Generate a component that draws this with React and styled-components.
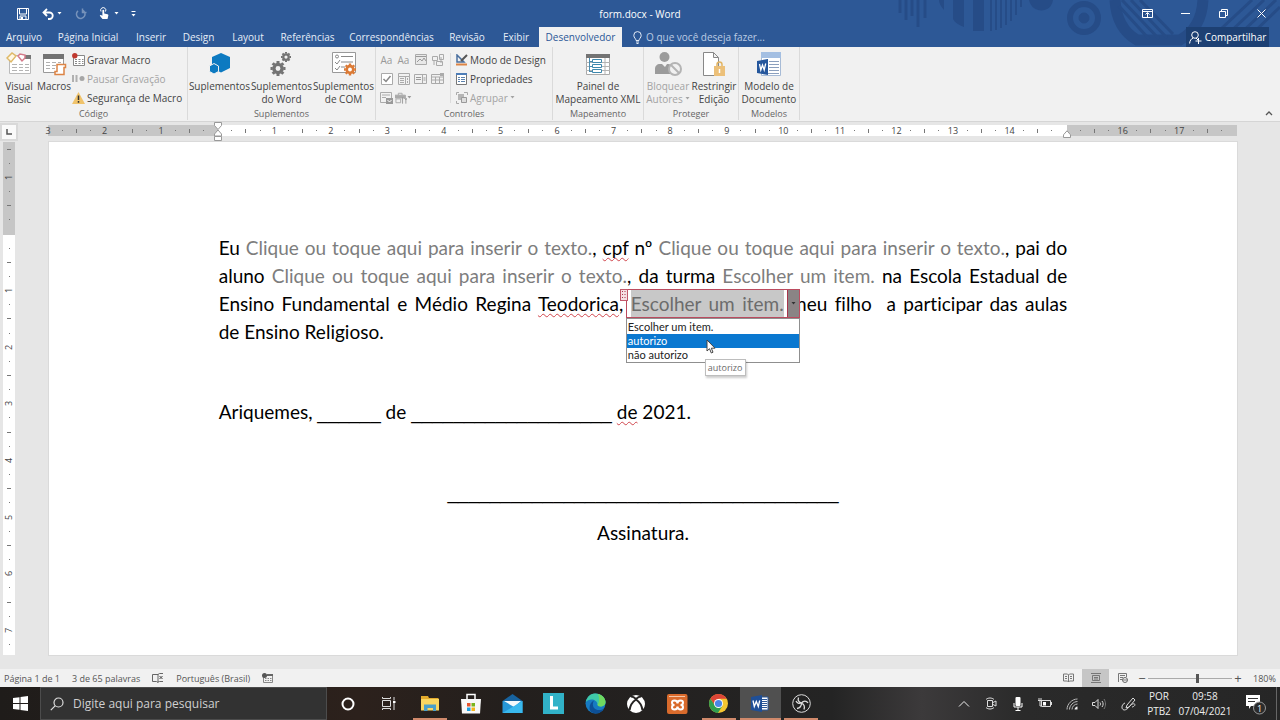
import { useState } from 'react';
import styled, { createGlobalStyle, css } from 'styled-components';

const GlobalStyle = createGlobalStyle`
  *, *::before, *::after {
    box-sizing: border-box;
  }

  body {
    margin: 0;
    font-family: 'Open Sans', 'Noto Sans', sans-serif;
    font-size: 10px;
    color: #444;
  }

  button, input, select {
    font: inherit;
    color: inherit;
    margin: 0;
    padding: 0;
    border: none;
    background: none;
  }
`;

const Screen = styled.div`
  display: flex;
  flex-direction: column;
  height: 100vh;
  overflow: hidden;
  background: #e6e6e6;
`;

/* ---------- title bar and tabs ---------- */

const Header = styled.header`
  position: relative;
  background: #2d5896;
  color: #fff;
`;

const HeaderArt = styled.svg`
  position: absolute;
  top: 0;
  right: 0;
`;

const TitleBar = styled.div`
  position: relative;
  display: grid;
  grid-template-columns: 1fr auto 1fr;
  align-items: center;
  height: 27px;
`;

const QuickAccess = styled.div`
  display: flex;
  align-items: center;
  gap: 8px;
  padding-left: 16px;
`;

const IconButton = styled.button`
  display: flex;
  align-items: center;
  justify-content: center;
  width: ${(p) => p.$w || 14}px;
  height: 16px;
  opacity: ${(p) => (p.$dim ? 0.35 : 1)};
`;

const Title = styled.h1`
  margin: 0;
  font-size: 10px;
  font-weight: 400;
`;

const WindowButtons = styled.div`
  display: flex;
  justify-content: flex-end;
`;

const WindowButton = styled.button`
  display: flex;
  align-items: center;
  justify-content: center;
  width: 38px;
  height: 26px;
`;

const TabRow = styled.nav`
  position: relative;
  display: flex;
  align-items: stretch;
  height: 20px;
`;

const Tab = styled.button`
  width: ${(p) => p.$w}px;
  font-size: 10px;
  white-space: nowrap;
  color: #e6edf7;
  ${(p) =>
    p.$active &&
    css`
      background: #f1f1f1;
      color: #2b5797;
    `}
`;

const TellMe = styled.label`
  display: flex;
  align-items: center;
  gap: 4px;
  flex: 1;
  padding-left: 11px;

  input {
    width: 160px;
    outline: none;
  }

  input::placeholder {
    color: #bccce4;
    opacity: 1;
  }
`;

const ShareButton = styled.button`
  display: flex;
  align-items: center;
  justify-content: center;
  gap: 3px;
  width: 83px;
  margin-right: 11px;
  background: #1d4073;
`;

/* ---------- ribbon ---------- */

const Ribbon = styled.section`
  display: flex;
  height: 75px;
  background: #f1f1f1;
  border-bottom: 1px solid #d5d5d5;
`;

const Group = styled.div`
  display: flex;
  flex-direction: column;
  width: ${(p) => p.$w}px;
  padding-top: 3px;
  margin-bottom: 1px;
  border-right: 1px solid #dadada;
`;

const GroupBody = styled.div`
  display: flex;
  flex: 1;
  min-height: 0;
  justify-content: ${(p) => p.$justify || 'center'};
  padding-left: ${(p) => p.$left || 0}px;
`;

const GroupLabel = styled.div`
  font-size: 9px;
  line-height: 12px;
  text-align: center;
  color: #666;
`;

const LargeButton = styled.button`
  display: flex;
  flex-direction: column;
  align-items: center;
  width: ${(p) => p.$w}px;
  height: 58px;
  font-size: 10px;
  line-height: 13px;
  white-space: nowrap;
  color: ${(p) => (p.$dim ? '#a3a3a3' : '#444')};

  svg {
    margin: 2px 0 4px;
  }

  span {
    display: flex;
    align-items: center;
    gap: 2px;
  }
`;

const Stack = styled.div`
  display: flex;
  flex-direction: column;
`;

const SmallButton = styled.button`
  display: flex;
  align-items: center;
  gap: 2px;
  height: 19px;
  white-space: nowrap;
  color: ${(p) => (p.$dim ? '#a3a3a3' : '#444')};
`;

const ControlGrid = styled.div`
  display: grid;
  grid-template-columns: repeat(4, 17px);
  grid-template-rows: repeat(3, 19px);
  margin-right: 4px;
`;

const ControlButton = styled.button`
  display: flex;
  align-items: center;
  justify-content: center;
  font-size: 10px;
  color: #999;
`;

const Divider = styled.div`
  width: 1px;
  height: 50px;
  margin: 3px 5px 0 0;
  background: #dcdcdc;
`;

const RibbonEnd = styled.div`
  display: flex;
  flex: 1;
  align-items: flex-end;
  justify-content: flex-end;
  padding: 0 4px 0 0;
`;

/* ---------- rulers and page ---------- */

const RulerRow = styled.div`
  display: flex;
  height: 20px;
  padding-right: 43px;
`;

const TabStop = styled.button`
  display: flex;
  align-items: center;
  justify-content: center;
  width: 18px;
  height: 18px;
  margin: 1px 30px 0 0;
  border: 2px solid #d9d9d9;
  background: #fafafa;
`;

const HRuler = styled.div`
  position: relative;
  display: flex;
  flex: 1;
  align-items: center;
  justify-content: space-between;
  height: 11px;
  margin: 3px 0 0;
  font-size: 9px;
  background: linear-gradient(to right, #c6c6c6 0 14.3%, #fff 14.3% 85.7%, #c6c6c6 85.7%);
`;

const HTick = styled.span`
  display: flex;
  align-items: center;
  justify-content: center;
  width: 0;
`;

const VRuler = styled.div`
  display: flex;
  flex-direction: column;
  align-items: center;
  justify-content: space-between;
  width: 12px;
  margin: 0 34px 0 3px;
  padding: 7px 0 10px;
  font-size: 9px;
  background: linear-gradient(#c6c6c6 0 93px, #fff 93px);
`;

const VTick = styled.span`
  display: flex;
  align-items: center;
  justify-content: center;
  height: 0;

  b {
    font-weight: 400;
    transform: rotate(-90deg);
  }
`;

const Mark = styled.i`
  flex: none;
  width: ${(p) => p.$w}px;
  height: ${(p) => p.$h}px;
  background: #777;
`;

const RulerMarker = styled.svg`
  position: absolute;
  top: ${(p) => p.$top}px;
  left: ${(p) => p.$at}%;
  margin-left: -4px;
`;

const Workspace = styled.main`
  display: flex;
  flex: 1;
  min-height: 0;
  padding: 0 43px 14px 0;
`;

const Page = styled.article`
  display: grid;
  grid-template-columns: 3fr 15fr 3fr;
  flex: 1;
  background: #fff;
  box-shadow: 0 0 0 1px #dadada;
  font-family: Lato, 'Open Sans', sans-serif;
  font-size: 19px;
  font-variant-ligatures: none;
  line-height: 28px;
  color: #000;
`;

const PageText = styled.div`
  grid-column: 2;
  min-width: 0;
  padding-top: 92px;
`;

const Line = styled.div`
  white-space: nowrap;
  text-align: justify;
  text-align-last: ${(p) => p.$align || 'justify'};
`;

const DateLine = styled.p`
  margin: 52px 0 0;
  white-space: nowrap;
`;

const Signature = styled.div`
  margin-top: 45px;
  text-align: center;
  line-height: 40px;
`;

const Blank = styled.span`
  font-family: 'Liberation Sans', Arial, sans-serif;
  font-size: 19px;
`;

const Field = styled.span`
  color: #7d7d7d;
`;

const Typo = styled.span`
  text-decoration: underline wavy #d0454c 1px;
  text-underline-offset: 2px;
  text-decoration-skip-ink: none;
`;

const ActiveField = styled.span`
  position: relative;
  padding: 2px 0;
  color: #6c6c6c;
  background: #c8c8c8;
`;

const FieldFrame = styled.span`
  position: absolute;
  top: -1px;
  left: -5px;
  right: -16px;
  height: 29px;
  border: 1px solid #bb4b5f;
  display: flex;
  justify-content: flex-end;
`;

const FieldHandle = styled.span`
  position: absolute;
  top: -1px;
  left: -7px;
  display: flex;
  align-items: center;
  justify-content: center;
  width: 8px;
  height: 12px;
  border: 1px solid #c2596b;
  background: #f6dfe3;
`;

const FieldArrow = styled.button`
  display: flex;
  align-items: center;
  justify-content: center;
  width: 12px;
  background: #8a8485;
  border-left: 1px solid #a8354b;
`;

const Options = styled.select`
  position: absolute;
  top: 28px;
  left: -1px;
  right: -1px;
  height: 45px;
  padding: 1px 0;
  overflow: hidden;
  border: 1px solid #8f8f8f;
  border-radius: 0;
  background: #fff;
  outline: none;
  font-family: Lato, sans-serif;
  font-size: 11px;
  line-height: 14px;
  color: #222;
  text-align-last: left;

  option {
    height: 14px;
    min-height: 14px;
    padding: 0 1px;
    line-height: 14px;
  }

  option:checked {
    background: linear-gradient(#0a78d0, #0a78d0);
    -webkit-text-fill-color: #fff;
  }
`;

const Pointer = styled.svg`
  position: absolute;
  top: 49px;
  left: 79px;
  z-index: 2;
`;

const Tooltip = styled.span`
  position: absolute;
  top: 69px;
  left: 78px;
  padding: 0 2px;
  border: 1px solid #bdbdbd;
  background: #fff;
  box-shadow: 1px 2px 2px rgba(0, 0, 0, 0.2);
  font-family: 'Open Sans', sans-serif;
  font-size: 9px;
  line-height: 15px;
  color: #6a6a6a;
`;

/* ---------- status bar ---------- */

const StatusBar = styled.footer`
  display: flex;
  align-items: center;
  height: 18px;
  background: #f1f1f1;
  font-size: 9px;
  color: #555;
`;

const StatusInfo = styled.div`
  display: flex;
  flex: 1;
  align-items: center;
  gap: 12px;
  padding-left: 4px;
`;

const ViewButton = styled.button`
  display: flex;
  align-items: center;
  justify-content: center;
  width: 27px;
  height: 18px;
  background: ${(p) => (p.$active ? '#c6c6c6' : 'none')};
`;

const ZoomButton = styled.button`
  width: 12px;
  font-size: 13px;
  line-height: 16px;
`;

const ZoomSlider = styled.input`
  appearance: none;
  width: 84px;
  height: 12px;
  background: linear-gradient(#aaa, #aaa) center / 100% 1px no-repeat;

  &::-webkit-slider-thumb {
    appearance: none;
    width: 3px;
    height: 9px;
    background: #555;
  }
`;

const ZoomValue = styled.output`
  width: 36px;
  padding-left: 9px;
`;

/* ---------- taskbar ---------- */

const Taskbar = styled.div`
  display: flex;
  height: 33px;
  background: linear-gradient(to right, #1f1c1a 0, #2c211c 28%, #231f1d 40%, #242424 65%, #3c3a3b 72%, #2a2a2a 80%, #262626);
  color: #eee;
`;

const StartButton = styled.button`
  display: flex;
  align-items: center;
  justify-content: center;
  width: 40px;
`;

const SearchBox = styled.label`
  display: flex;
  align-items: center;
  gap: 9px;
  width: 287px;
  padding-left: 9px;
  border: 1px solid #4c4c4c;
  background: #323232;

  input {
    flex: 1;
    font-size: 12px;
    outline: none;
  }

  input::placeholder {
    color: #d0d0d0;
    opacity: 1;
  }
`;

const Apps = styled.div`
  display: flex;
  width: 495px;
`;

const AppButton = styled.button`
  display: flex;
  flex: 1;
  align-items: center;
  justify-content: center;
  background: ${(p) => (p.$active ? '#505050' : 'none')};
  background-image: ${(p) => (p.$open ? 'linear-gradient(#d0896b, #d0896b)' : 'none')};
  background-repeat: no-repeat;
  background-position: bottom;
  background-size: ${(p) => (p.$active ? '100%' : '34px')} 2px;
`;

const Tray = styled.div`
  display: flex;
  flex: 1;
  justify-content: flex-end;
`;

const TrayButton = styled.button`
  display: flex;
  flex-direction: column;
  align-items: center;
  justify-content: center;
  width: ${(p) => p.$w || 27}px;
  font-size: 10px;
  line-height: 15px;
`;

const ShowDesktop = styled.button`
  width: 4px;
  border-left: 1px solid #666;
`;

/* ---------- icons ---------- */

function Svg({ w, h, children, ...rest }) {
  return (
    <svg width={w} height={h} viewBox={`0 0 ${w} ${h}`} fill="none" aria-hidden="true" {...rest}>
      {children}
    </svg>
  );
}

const Caret = ({ color = 'currentColor' }) => (
  <Svg w={5} h={3}><path d="M.5 0h4L2.5 2.5z" fill={color} /></Svg>
);

const SaveIcon = () => (
  <Svg w={12} h={12}>
    <path d="M.5.5h11v11H.5z" stroke="#fff" />
    <path d="M2.500 1v5h7V1M3 11V8h6v3" stroke="#fff" />
    <path d="M4 9h2v2.500H4z" fill="#fff" />
  </Svg>
);

const UndoIcon = () => (
  <Svg w={12} h={12}>
    <path d="M5 1 1.500 4.500 5 8M2 4.500h5.500a3.200 3.200 0 0 1 0 6.500H6" stroke="#fff" strokeWidth="1.800" />
  </Svg>
);

const RedoIcon = () => (
  <Svg w={12} h={12}>
    <path d="M7.500 2.200A4.300 4.300 0 1 1 3 2.800M7.500.5v4h4" stroke="#fff" strokeWidth="1.500" />
  </Svg>
);

const TouchIcon = () => (
  <Svg w={10} h={13}>
    <path d="M2 4.500a2.600 2.600 0 1 1 4.500 0" stroke="#fff" />
    <path d="M3.400 3.200a1 1 0 0 1 1.800 0v3.300l3.300.8c.8.200 1 .8.800 1.500L8.500 12h-5L.8 8.800c0-1 1.200-1.200 2.600 0z" fill="#fff" />
  </Svg>
);

const BulbIcon = () => (
  <Svg w={9} h={13}>
    <path d="M3 9.500C3 7.500.8 7 .8 4.300a3.700 3.700 0 0 1 7.400 0C8.200 7 6 7.500 6 9.500zM3 11h3M3.500 12.500h2" stroke="#e3ebf6" />
  </Svg>
);

const ShareIcon = () => (
  <Svg w={13} h={13}>
    <circle cx="6" cy="4" r="3.300" stroke="#fff" />
    <path d="M.6 12.500c.3-3 1.500-4.700 3.600-5.500M7 7l2 2M9.500 7v6M6.500 10h6" stroke="#fff" />
  </Svg>
);

const VisualBasicIcon = () => (
  <Svg w={26} h={24}>
    <path d="M3.500 3.500h21v18h-21z" fill="#fff" stroke="#bbb" />
    <path d="M17 3h8v4h-8z" fill="#777" />
    <path d="M6 12.500h5m2 0h4m2 0h4M6 15.500h5m2 0h4m2 0h4M6 18.500h5m2 0h4m2 0h4" stroke="#b4b4b4" />
    <path d="m1 6 5-5 4 3-5 6z" fill="#fff8e6" stroke="#dfb968" strokeWidth="1.500" />
    <path d="m12 4 2-2 5 1v3l-3 3z" fill="#fff" stroke="#d57b8b" strokeWidth="1.500" />
  </Svg>
);

const MacrosIcon = () => (
  <Svg w={25} h={24}>
    <path d="M1.500 2.500h20v18h-20z" fill="#fff" stroke="#999" />
    <path d="M1 2h21v5H1z" fill="#737373" />
    <path d="M4 10.500h4m2 0h4m2 0h3M4 13.500h4m2 0h4M4 16.500h4m2 0h3" stroke="#b0b0b0" />
    <path d="M15 12.500h8.500v3H22v7H13v-3h2z" fill="#fff" stroke="#dc8445" strokeWidth="1.500" />
  </Svg>
);

const RecordIcon = () => (
  <Svg w={13} h={13}>
    <path d="M1.500 2.500h11v10h-11z" fill="#fff" stroke="#888" />
    <path d="M3 6.500h2m1.500 0h2m1.500 0h1.500M3 8.500h2m1.500 0h2m1.500 0h1.500M3 10.500h2m1.500 0h2m1.500 0h1.500" stroke="#888" />
    <circle cx="2.800" cy="2.800" r="2.700" fill="#c0392f" />
  </Svg>
);

const PauseIcon = () => (
  <Svg w={13} h={8}>
    <path d="M1 0v7M4.500 0v7" stroke="#b0b0b0" strokeWidth="2" />
    <circle cx="10" cy="3.500" r="2.500" fill="#a6a6a6" />
  </Svg>
);

const WarningIcon = () => (
  <Svg w={13} h={12}>
    <path d="M6.500 0 13 12H0z" fill="#f0c36b" />
    <path d="M6.500 3.500v4.500M6.500 9v1.800" stroke="#333" strokeWidth="1.500" />
  </Svg>
);

const AddinsIcon = () => (
  <Svg w={24} h={24}>
    <path d="m13 1 9 4v11l-9 4.500-9-4.500V5z" fill="#0d7ac1" />
    <path d="m6 11.500 4.500 2.500v5.500L6 22l-4.500-2.500V14z" fill="#0d7ac1" stroke="#f1f1f1" />
  </Svg>
);

function Gear({ cx, cy, r, color }) {
  return (
    <g transform={`translate(${cx} ${cy})`}>
      <circle r={r * 0.55} stroke={color} strokeWidth={r * 0.45} />
      {[0, 45, 90, 135, 180, 225, 270, 315].map((a) => (
        <path key={a} d={`M0 ${-r * 0.7}V${-r}`} stroke={color} strokeWidth={r * 0.4} transform={`rotate(${a})`} />
      ))}
    </g>
  );
}

const WordAddinsIcon = () => (
  <Svg w={24} h={24}>
    <Gear cx={8} cy={16.500} r={7.500} color="#737373" />
    <Gear cx={16} cy={5} r={5} color="#737373" />
  </Svg>
);

const ComAddinsIcon = () => (
  <Svg w={26} h={24}>
    <path d="M1.500.5h23v20h-23z" fill="#fff" stroke="#999" />
    <circle cx="6" cy="4.500" r="1.500" stroke="#888" />
    <path d="M10 4.500h12M10 10h12M10 15h4M4 10l2 2 3-4M4 16l2 2 3-4" stroke="#888" />
    <Gear cx={19} cy={17.500} r={6} color="#dc7a35" />
  </Svg>
);

const RichTextIcon = () => (
  <Svg w={12} h={11}>
    <path d="M.5.5h11v10H.5z" fill="#e8e8e8" stroke="#aaa" />
    <path d="M1 2.500h10M2 8l3-3 2 2 2-3 2 3" stroke="#999" />
  </Svg>
);

const BlocksIcon = () => (
  <Svg w={12} h={12}>
    <path d="M.5 2.500h5v4h-5zM7.500.5h4v5h-4zM4.500 7.500h6v4h-6zM9 3v6M2 7v4" stroke="#aaa" />
  </Svg>
);

const CheckIcon = () => (
  <Svg w={12} h={12}>
    <path d="M.5.5h11v11H.5z" stroke="#aaa" fill="#fff" />
    <path d="m2.500 6 2.500 2.500L9.500 3" stroke="#888" strokeWidth="1.500" />
  </Svg>
);

const ComboIcon = () => (
  <Svg w={12} h={12}>
    <path d="M.5.500h11v3H.5zM.5 3.500h7v8h-7zM7.500 3.500h4v8h-4z" stroke="#aaa" />
    <path d="M2 5.500h4M2 7.500h4M2 9.500h4M9.500 5v2M9.500 8v2" stroke="#aaa" />
  </Svg>
);

const DropIcon = () => (
  <Svg w={13} h={10}>
    <path d="M.5.5h12v9H.5zM8.500.5v9" stroke="#aaa" />
    <path d="M2 3.500h5M2 5.500h5M9.500 4h2M9.500 6h2" stroke="#999" />
  </Svg>
);

const DateIcon = () => (
  <Svg w={13} h={11}>
    <path d="M.5 1.500h12v9H.5zM.5 4h12M4.500 4v6M8.500 4v6M.5 7h12" stroke="#aaa" />
    <path d="M9 0h4v3H9z" fill="#aaa" />
  </Svg>
);

const RepeatIcon = () => (
  <Svg w={13} h={12}>
    <path d="M.5.5h11v10H.5zM2 3h8M2 5.500h4" stroke="#aaa" />
    <path d="M6 6h7v6H6z" fill="#999" />
    <path d="m7.500 8 2 2 2-2" stroke="#fff" />
  </Svg>
);

const ToolboxIcon = () => (
  <Svg w={13} h={12}>
    <path d="M3.500 3V1h4v2M0 3h11v3H0zM1 7h5v4H1z" stroke="#aaa" />
    <path d="M0 3h11v3H0z" fill="#aaa" />
    <path d="M8 5v7M11.500 6v6M10 6l1.500 2L13 6" stroke="#999" />
  </Svg>
);

const DesignIcon = () => (
  <Svg w={12} h={12}>
    <path d="M1 1v7h7z" stroke="#4a6f9f" strokeWidth="1.500" />
    <path d="m5 7 6-6" stroke="#555" strokeWidth="2" />
    <path d="M0 10.500h11" stroke="#dc8445" strokeWidth="2" />
  </Svg>
);

const PropertiesIcon = () => (
  <Svg w={12} h={12}>
    <path d="M.5.5h10v11H.5z" fill="#fff" stroke="#777" />
    <path d="M0 1h11" stroke="#4d7db8" strokeWidth="2" />
    <path d="M2 4.500h2M5 4.500h4M2 6.500h2M5 6.500h4M2 8.500h2M5 8.500h4" stroke="#5c82ad" />
  </Svg>
);

const GroupIcon = () => (
  <Svg w={12} h={12}>
    <path d="M2 2h6v6H2z" fill="#b5b5b5" />
    <path d="M5.500 5.500h5v5h-5z" fill="#ddd" stroke="#999" />
    <path d="M.5 3V.5H3M8 .5h3.500V3M.5 9v2.500H3" stroke="#aaa" />
  </Svg>
);

const XmlIcon = () => (
  <Svg w={24} h={24}>
    <path d="M.5 3.500h23v19H.5z" fill="#fff" stroke="#aaa" />
    <path d="M0 2h24v4H0z" fill="#737373" />
    <path d="M0 10.500h24M0 14.500h24M0 18.500h24M19 6v16" stroke="#b4b4b4" />
    <path d="M3.500 6v14M3.500 9.500H7M3.500 14.500H7M3.500 19.500H7" stroke="#4b8db0" />
    <path d="M6.500 7.500h9v3h-9zM6.500 12.500h9v3h-9zM6.500 17.500h9v3h-9z" fill="#fff" stroke="#3f88ad" />
  </Svg>
);

const BlockAuthorsIcon = () => (
  <Svg w={28} h={24}>
    <circle cx="10.500" cy="5" r="5" fill="#9b9b9b" />
    <path d="M1 22v-5c0-3 2-5 5-5h2l3 3 2-3h1c2 0 4 1 4 3v7z" fill="#9b9b9b" />
    <circle cx="21" cy="17" r="6" fill="#f1f1f1" stroke="#b4b4b4" strokeWidth="2" />
    <path d="m17 13 8 8" stroke="#b4b4b4" strokeWidth="2" />
  </Svg>
);

const RestrictIcon = () => (
  <Svg w={24} h={24}>
    <path d="M1.500.5h10l5 5v18h-15zM11.500.5v5h5" fill="#fff" stroke="#888" />
    <path d="M15 15v-2.500a2.500 2.500 0 0 1 5 0V15" stroke="#e2b564" strokeWidth="1.500" />
    <path d="M12 14h11v10H12z" fill="#ecc079" />
    <path d="M17.500 17v4" stroke="#fff" strokeWidth="1.500" />
  </Svg>
);

const TemplateIcon = () => (
  <Svg w={24} h={24}>
    <path d="M4.500.5h19v23h-19z" fill="#fff" stroke="#a7bbd6" />
    <path d="M4 0h20v6H4z" fill="#a4bfe2" />
    <path d="M12 9.500h10M12 12.500h10M12 15.500h10M12 18.500h10M8 21.500h14" stroke="#8b9fbd" />
    <path d="m0 9 11-2v16L0 21z" fill="#24569c" />
    <path d="m2.500 12 1.300 6L5.500 13l1.700 5 1.500-6.500" stroke="#fff" strokeWidth="1.300" />
  </Svg>
);

const BookIcon = () => (
  <Svg w={11} h={10}>
    <path d="M.5 1h4l1 1 1-1h4v7h-4l-1 1-1-1h-4zM5.500 2v7M2 3.500h2M2 5.500h2M7 3.500h2M7 5.500h2" stroke="#777" />
  </Svg>
);

const ProofIcon = () => (
  <Svg w={12} h={10}>
    <path d="M6 1.500H.5v7h4l1.500 1v-8l1.500-1H11M6 9l1.500-.5H11" stroke="#666" />
    <path d="m7.500 3 3 3m0-3-3 3" stroke="#444" />
  </Svg>
);

const MacroStatusIcon = () => (
  <Svg w={11} h={10}>
    <path d="M1.500 2.500h9v7h-9zM3 5.500h1.500m1 0H7m1 0h1.500M3 7.500h1.500m1 0H7m1 0h1.500" stroke="#888" />
    <circle cx="2.500" cy="2.500" r="2.500" fill="#555" />
    <path d="M5 2h6" stroke="#666" strokeWidth="2" />
  </Svg>
);

const PrintLayoutIcon = () => (
  <Svg w={10} h={10}>
    <path d="M0 .5h10M0 9.500h10M1.500 2.500h7v5h-7zM3 4.500h4M3 6h4" stroke="#777" />
  </Svg>
);

const WebLayoutIcon = () => (
  <Svg w={10} h={10}>
    <path d="M.5 9V.5h8V4M2 2.500h5M2 4.500h3M2 6.500h2" stroke="#777" />
    <circle cx="7" cy="7" r="2.500" stroke="#666" />
    <path d="M5 7h4" stroke="#777" />
  </Svg>
);

const WindowsIcon = () => (
  <Svg w={15} h={15}>
    <path d="M0 2 6.500 1.200V7H0zM7.500 1 15 0v7H7.500zM0 8h6.500v5.800L0 13zM7.500 8H15v7l-7.500-1z" fill="#fff" />
  </Svg>
);

const SearchIcon = () => (
  <Svg w={14} h={14}>
    <circle cx="8.500" cy="5.500" r="4.500" stroke="#ddd" strokeWidth="1.200" />
    <path d="M5.300 8.700.8 13.200" stroke="#ddd" strokeWidth="1.200" />
  </Svg>
);

const CortanaIcon = () => (
  <Svg w={14} h={14}><circle cx="7" cy="7" r="5.500" stroke="#fff" strokeWidth="2" /></Svg>
);

const TaskViewIcon = () => (
  <Svg w={15} h={13}>
    <path d="M1.500 3.500h8v6h-8zM1.500 0v1.500h8V0M1.500 13v-1.500h8V13M13 0v3.500M13 6v7" stroke="#ddd" />
    <path d="M12 4h2.500v2H12z" fill="#fff" />
  </Svg>
);

const ExplorerIcon = () => (
  <Svg w={20} h={17}>
    <path d="M1 1h7l1 2h9.500v12H1z" fill="#e3ab2c" />
    <path d="M1 4h18v11.500H1z" fill="#fad661" />
    <path d="M4 9.500h12V16h-3v-3H7.500v3H4z" fill="#4a9fca" />
  </Svg>
);

const StoreIcon = () => (
  <Svg w={20} h={21}>
    <path d="M6 6V1.500h8V6" stroke="#fff" strokeWidth="1.500" />
    <path d="M0 6h20l-1 14.500H1z" fill="#f8f8f8" />
    <path d="M6 10h3.500v3.500H6z" fill="#e5532d" />
    <path d="M10.500 10H14v3.500h-3.500z" fill="#7ab51d" />
    <path d="M6 14.500h3.500V18H6z" fill="#1ba0e2" />
    <path d="M10.500 14.500H14V18h-3.500z" fill="#f5b51c" />
  </Svg>
);

const MailIcon = () => (
  <Svg w={21} h={20}>
    <path d="m.5 7 10-7 10 7z" fill="#17639f" />
    <path d="M.5 7h20v12H.5z" fill="#2697d8" />
    <path d="M2 7h17l-7 6z" fill="#f4f8fb" />
    <path d="m.5 19 20-12v12z" fill="#39b9ee" />
  </Svg>
);

const LIcon = () => (
  <Svg w={21} h={21}>
    <path d="M0 0h21v21H0z" fill="#31b2c8" />
    <path d="M8.500 3v12h6.500" stroke="#fff" strokeWidth="3" />
  </Svg>
);

const EdgeIcon = () => (
  <Svg w={21} h={21}>
    <circle cx="10.500" cy="10.500" r="10" fill="#167ac2" />
    <path d="M.8 9C2 3 6 .5 10.500.5c6 0 10 4.500 10 8.500 0 3-2.500 4.500-5 4.500-2 0-3-1-3-2 0-3-3-5-6-5C4 6.500 2 7.500.8 9z" fill="#3fc9a8" />
    <path d="M13 1c5 1 7.500 5 7.500 8 0 3-2.500 4.500-5 4.500-2 0-3-1-3-2 2-2 2-6 .5-10.500z" fill="#6fd960" />
    <path d="M7 19.500C3 17 4 10 9 7.500 6.500 11 8 17 14 17c2 0 3.500-.5 5-1.500-2 4-7 6.500-12 4z" fill="#0d4f96" />
  </Svg>
);

const XboxIcon = () => (
  <Svg w={18} h={18}>
    <circle cx="9" cy="9" r="9" fill="#fff" />
    <path d="M4 1.500C6 1.500 8 3 9 4c1-1 3-2.500 5-2.500M9 4.500C6 6.500 3 11 2.500 15.500M9 4.500c3 2 6 6.500 6.500 11" stroke="#252322" strokeWidth="2" />
  </Svg>
);

const XamppIcon = () => (
  <Svg w={21} h={20}>
    <rect width="20.500" height="20" rx="2" fill="#d96b2c" />
    <path d="M2 2.500h16" stroke="#f5c7a8" />
    <path d="M7.500 6.500c2 0 3 1.500 3 3 0-1.500 1-3 3-3s2.500 1 2.500 2-.8 2.500-2.500 2.500c1.700 0 2.500 1.200 2.500 2.300s-.8 2.200-2.500 2.200-3-1.500-3-3c0 1.500-1 3-3 3S5 14.500 5 13.300 5.800 11 7.500 11C5.800 11 5 9.500 5 8.500s.8-2 2.500-2z" stroke="#fff" strokeWidth="2" />
  </Svg>
);

const ChromeIcon = () => (
  <Svg w={19} h={19}>
    <circle cx="9.500" cy="9.500" r="9.500" fill="#f4c531" />
    <path d="M1.300 4.800A9.500 9.500 0 0 1 17.700 4.800H9.500v4.500l-3.500 2.500z" fill="#dc4537" />
    <path d="M1.300 4.800a9.500 9.500 0 0 0 7.700 14.200l4.500-7.200-7 .5z" fill="#2f9e50" />
    <circle cx="9.500" cy="9.500" r="4.500" fill="#fff" />
    <circle cx="9.500" cy="9.500" r="3.600" fill="#4a86e8" />
  </Svg>
);

const WordIcon = () => (
  <Svg w={18} h={17}>
    <path d="M9 2h8v13H9z" fill="#fff" stroke="#2b5797" />
    <path d="M10 4.500h6M10 6.500h6M10 8.500h6M10 10.500h6M10 12.500h6" stroke="#2b5797" />
    <path d="m0 2 11-2v17L0 15z" fill="#1f4f97" />
    <path d="m2 5.500 1.300 6L5.300 6.500l2 5L8.700 5.500" stroke="#fff" strokeWidth="1.300" />
  </Svg>
);

const ObsIcon = () => (
  <Svg w={19} h={19}>
    <circle cx="9.500" cy="9.500" r="8.800" fill="#222" stroke="#ddd" />
    <path d="M6.500 3.500c-1 3 .5 5 3 5.500 2-2.500 5-2.500 6.500 0M9.500 9c0 2.500-1 5-4.500 5.500M9.500 9c2 1 3.500 3.500 2.500 6.500M4 7c1 2 3 3 5 2" stroke="#ddd" strokeWidth="1.300" />
  </Svg>
);

const ChevronIcon = () => (
  <Svg w={12} h={8}><path d="m1 6.500 5-5 5 5" stroke="#eee" /></Svg>
);

const CameraIcon = () => (
  <Svg w={12} h={13}>
    <path d="M2.500 3.500h5v6h-5zM8 5.500l3-1.500v5L8 7.500M1 2.500C3 .5 7 .5 9 2.500M1 10.500c2 2 6 2 8 0" stroke="#ddd" />
  </Svg>
);

const MicIcon = () => (
  <Svg w={10} h={14}>
    <rect x="2.500" width="5" height="9" rx="1" fill="#fff" />
    <path d="M1 6v4h8V6M5 10v3M2.500 13.500h5" stroke="#fff" />
  </Svg>
);

const BatteryIcon = () => (
  <Svg w={14} h={11}>
    <path d="M3.500 2.500h9v6h-9zM13.500 4v3M1 0v2M3 0v2M0 2.500h4M2 3v5h1" stroke="#ddd" />
    <path d="M5 4h3v3.500H5z" fill="#fff" />
  </Svg>
);

const WifiIcon = () => (
  <Svg w={12} h={12}>
    <path d="M1 11.500C1 6 6 1 11.500 1M3.500 11.500c0-4 4-8 8-8M6 11.500c0-3 2.500-5.500 5.500-5.500" stroke="#bbb" />
    <path d="M8.500 11.500c0-1.500 1.500-3 3-3v3z" fill="#eee" />
  </Svg>
);

const VolumeIcon = () => (
  <Svg w={14} h={12}>
    <path d="M.5 4.500H3l3-3v9l-3-3H.5zM8 4.500c.7 1 .7 2 0 3M10 3c1.500 2 1.500 4 0 6" stroke="#ddd" />
    <path d="M12 1c2 3.500 2 6.500 0 10" stroke="#777" />
  </Svg>
);

const PenIcon = () => (
  <Svg w={15} h={14}>
    <path d="m5 11 1-3 6-7 2 2-6 7zM4 6c-3 1-4 5-2 6.500s5-1 6-2.500 4-4 5.500-3-1 3-2.500 3" stroke="#ddd" />
  </Svg>
);

const NotificationIcon = () => (
  <Svg w={22} h={22}>
    <path d="M1 2h14v11H6l-2 3v-3H1z" fill="#fff" />
    <path d="M3 5.500h10M3 8.500h7" stroke="#333" />
    <circle cx="14.500" cy="15" r="6" fill="#2c2c2c" stroke="#999" />
    <text x="14.500" y="18.500" textAnchor="middle" fontSize="9" fill="#fff">1</text>
  </Svg>
);

/* ---------- data ---------- */

const TABS = [
  ['Arquivo', 48], ['Página Inicial', 80], ['Inserir', 46], ['Design', 49], ['Layout', 50],
  ['Referências', 69], ['Correspondências', 99], ['Revisão', 52], ['Exibir', 46], ['Desenvolvedor', 83],
];

const APPS = [
  { name: 'Cortana', Icon: CortanaIcon },
  { name: 'Visão de Tarefas', Icon: TaskViewIcon },
  { name: 'Explorador de Arquivos', Icon: ExplorerIcon, open: true },
  { name: 'Microsoft Store', Icon: StoreIcon },
  { name: 'Email', Icon: MailIcon },
  { name: 'L', Icon: LIcon },
  { name: 'Edge', Icon: EdgeIcon },
  { name: 'Xbox', Icon: XboxIcon },
  { name: 'XAMPP', Icon: XamppIcon },
  { name: 'Chrome', Icon: ChromeIcon, open: true },
  { name: 'Word', Icon: WordIcon, open: true, active: true },
  { name: 'OBS', Icon: ObsIcon, open: true },
];

const TRAY = [
  ['Mostrar ícones ocultos', ChevronIcon], ['Câmera', CameraIcon], ['Microfone', MicIcon],
  ['Bateria', BatteryIcon], ['Rede', WifiIcon], ['Volume', VolumeIcon],
];

const CONTROLS = [
  ['Imagem', RichTextIcon], ['Blocos', BlocksIcon], ['Caixa de seleção', CheckIcon], ['Caixa de combinação', ComboIcon],
  ['Lista suspensa', DropIcon], ['Data', DateIcon], ['Repetição', RepeatIcon],
];

/* ---------- components ---------- */

function HorizontalRuler() {
  // four ticks per centimetre, 21 cm of paper with 3 cm margins
  const ticks = Array.from({ length: 85 }, (_, i) => {
    if (i % 2) return <Mark $w={1} $h={1} />;
    if (i % 4) return <Mark $w={1} $h={4} />;
    const cm = i / 4 - 3;
    return cm === 0 || cm === 15 || cm === 18 ? null : Math.abs(cm);
  });
  return (
    <HRuler>
      {ticks.map((t, i) => <HTick key={i}>{t}</HTick>)}
      <RulerMarker $top={-3} $at={14.3} width="8" height="19" fill="#fff" stroke="#999">
        <path d="M.5.500h7v3L4 7.500.5 3.500zM4 8l3.500 4v2h-7v-2zM.5 14.500h7v4h-7z" />
      </RulerMarker>
      <RulerMarker $top={5} $at={85.7} width="8" height="8" fill="#fff" stroke="#999">
        <path d="m4 .8 3.500 4v2.700h-7V4.800z" />
      </RulerMarker>
    </HRuler>
  );
}

function VerticalRuler() {
  const ticks = Array.from({ length: 36 }, (_, i) => {
    const q = i - 6;
    if (q % 2) return <Mark $w={1} $h={1} />;
    if (q % 4) return <Mark $w={4} $h={1} />;
    return q === 0 ? null : <b>{Math.abs(q / 4)}</b>;
  });
  return <VRuler>{ticks.map((t, i) => <VTick key={i}>{t}</VTick>)}</VRuler>;
}

function ChoiceField() {
  const [choice, setChoice] = useState('autorizo');
  return (
    <ActiveField>
      Escolher um item.
      <FieldFrame>
        <FieldHandle>
          <Svg w={4} h={8}><path d="M.5 0v8M3 0v8" stroke="#a8354b" strokeDasharray="1 2" /></Svg>
        </FieldHandle>
        <FieldArrow aria-label="Abrir lista"><Caret color="#333" /></FieldArrow>
        <Options size="3" aria-label="Escolher um item" value={choice} onChange={(e) => setChoice(e.target.value)}>
          <option value="">Escolher um item.</option>
          <option value="autorizo">autorizo</option>
          <option value="nao">não autorizo</option>
        </Options>
        <Pointer width="10" height="15" fill="#fff" stroke="#444">
          <path d="M1 1v11l2.500-2.300L5.300 14l1.700-.8-1.700-4H9z" />
        </Pointer>
        <Tooltip role="tooltip">autorizo</Tooltip>
      </FieldFrame>
    </ActiveField>
  );
}

function App() {
  const [zoom, setZoom] = useState(59);

  return (
    <Screen>
      <GlobalStyle />
      <Header>
        <HeaderArt width="390" height="47" viewBox="890 0 390 47" fill="none" stroke="#264c87" aria-hidden="true">
          <path d="M900 0v13M906 0v20M912 0v16M918 0v27M925 0v18" strokeWidth="3" />
          <path d="M939 0h5v10c-3-3-5-7-5-10zM953 0h11v27c-5-2-9-4-11-8zM973 0h11v31h-11z" fill="#264c87" stroke="none" />
          <path d="M991 0v31M996 0v30M1001 0v28M1006 0v25M1011 0v21M1016 0v15M1021 0v7" strokeWidth="2" />
          <path d="M1029 0h24c-2 14-21 14-24 0z" fill="#264c87" stroke="none" />
          <circle cx="1084" cy="18" r="14" strokeWidth="6" />
          <circle cx="1084" cy="18" r="5" fill="#264c87" />
          <path d="M1115 0c1 18 8 32 22 40h43c15-8 22-22 23-40" strokeWidth="11" />
          <path d="m1119 6 30 33M1122 0l37 39M1131 0l36 38M1140 0l33 34M1222 28l30-28M1228 34l36-34M1240 34l36-34M1252 34l28-27" strokeWidth="3" />
        </HeaderArt>
        <TitleBar>
          <QuickAccess>
            <IconButton aria-label="Salvar"><SaveIcon /></IconButton>
            <IconButton $w={28} aria-label="Desfazer"><UndoIcon />&nbsp;<Caret /></IconButton>
            <IconButton $dim aria-label="Refazer"><RedoIcon /></IconButton>
            <IconButton $w={26} aria-label="Modo de toque"><TouchIcon />&nbsp;&nbsp;<Caret /></IconButton>
            <IconButton $w={6} aria-label="Personalizar"><Svg w={5} h={6}><path d="M.5.5h4" stroke="#fff" /><path d="M.5 3h4L2.500 5.500z" fill="#fff" /></Svg></IconButton>
          </QuickAccess>
          <Title>form.docx - Word</Title>
          <WindowButtons>
            <WindowButton aria-label="Opções da faixa de opções">
              <Svg w={11} h={9}><path d="M.5.5h10v8H.5zM.5 2.500h10M5.500 8V4M3.500 5.500l2-2 2 2" stroke="#fff" /></Svg>
            </WindowButton>
            <WindowButton aria-label="Minimizar"><Svg w={9} h={1}><path d="M0 .5h9" stroke="#fff" /></Svg></WindowButton>
            <WindowButton aria-label="Restaurar">
              <Svg w={9} h={9}><path d="M.5 2.500h6v6h-6zM2.500 2V.5h6v6H7" stroke="#fff" /></Svg>
            </WindowButton>
            <WindowButton aria-label="Fechar"><Svg w={9} h={9}><path d="m.5.5 8 8m0-8-8 8" stroke="#fff" /></Svg></WindowButton>
          </WindowButtons>
        </TitleBar>
        <TabRow>
          {TABS.map(([name, w]) => (
            <Tab key={name} $w={w} $active={name === 'Desenvolvedor'}>{name}</Tab>
          ))}
          <TellMe>
            <BulbIcon />
            <input aria-label="Diga-me" placeholder="O que você deseja fazer..." />
          </TellMe>
          <ShareButton><ShareIcon />Compartilhar</ShareButton>
        </TabRow>
      </Header>

      <Ribbon>
        <Group $w={188}>
          <GroupBody $justify="flex-start" $left={2}>
            <LargeButton $w={34}><VisualBasicIcon />Visual<br />Basic</LargeButton>
            <LargeButton $w={36}><MacrosIcon />Macros</LargeButton>
            <Stack>
              <SmallButton><RecordIcon />Gravar Macro</SmallButton>
              <SmallButton $dim><PauseIcon />Pausar Gravação</SmallButton>
              <SmallButton><WarningIcon />Segurança de Macro</SmallButton>
            </Stack>
          </GroupBody>
          <GroupLabel>Código</GroupLabel>
        </Group>
        <Group $w={188}>
          <GroupBody>
            <LargeButton $w={62}><AddinsIcon />Suplementos</LargeButton>
            <LargeButton $w={62}><WordAddinsIcon />Suplementos<br />do Word</LargeButton>
            <LargeButton $w={62}><ComAddinsIcon />Suplementos<br />de COM</LargeButton>
          </GroupBody>
          <GroupLabel>Suplementos</GroupLabel>
        </Group>
        <Group $w={177}>
          <GroupBody $justify="flex-start" $left={2}>
            <ControlGrid>
              <ControlButton>Aa</ControlButton>
              <ControlButton>Aa</ControlButton>
              {CONTROLS.map(([name, Icon]) => (
                <ControlButton key={name} aria-label={name}><Icon /></ControlButton>
              ))}
              <ControlButton aria-label="Ferramentas herdadas"><ToolboxIcon /><Caret /></ControlButton>
            </ControlGrid>
            <Divider />
            <Stack>
              <SmallButton><DesignIcon />Modo de Design</SmallButton>
              <SmallButton><PropertiesIcon />Propriedades</SmallButton>
              <SmallButton $dim><GroupIcon />Agrupar<Caret /></SmallButton>
            </Stack>
          </GroupBody>
          <GroupLabel>Controles</GroupLabel>
        </Group>
        <Group $w={91}>
          <GroupBody>
            <LargeButton $w={88}><XmlIcon />Painel de<br />Mapeamento XML</LargeButton>
          </GroupBody>
          <GroupLabel>Mapeamento</GroupLabel>
        </Group>
        <Group $w={95}>
          <GroupBody>
            <LargeButton $w={46} $dim><BlockAuthorsIcon />Bloquear<span>Autores<Caret /></span></LargeButton>
            <LargeButton $w={46}><RestrictIcon />Restringir<br />Edição</LargeButton>
          </GroupBody>
          <GroupLabel>Proteger</GroupLabel>
        </Group>
        <Group $w={61}>
          <GroupBody>
            <LargeButton $w={58}><TemplateIcon />Modelo de<br />Documento</LargeButton>
          </GroupBody>
          <GroupLabel>Modelos</GroupLabel>
        </Group>
        <RibbonEnd>
          <IconButton aria-label="Recolher a faixa de opções">
            <Svg w={8} h={5}><path d="m1 4 3-3 3 3" stroke="#555" strokeWidth="1.300" /></Svg>
          </IconButton>
        </RibbonEnd>
      </Ribbon>

      <RulerRow>
        <TabStop aria-label="Tabulação esquerda"><Svg w={6} h={6}><path d="M1 0v5h5" stroke="#555" strokeWidth="1.500" /></Svg></TabStop>
        <HorizontalRuler />
      </RulerRow>

      <Workspace>
        <VerticalRuler />
        <Page>
          <PageText>
            <Line>
              Eu <Field>Clique ou toque aqui para inserir o texto.</Field>, <Typo>cpf</Typo> nº{' '}
              <Field>Clique ou toque aqui para inserir o texto.</Field>, pai do
            </Line>
            <Line>
              aluno <Field>Clique ou toque aqui para inserir o texto.</Field>, da turma{' '}
              <Field>Escolher um item.</Field> na Escola Estadual de
            </Line>
            <Line>
              Ensino Fundamental e Médio Regina <Typo>Teodorica</Typo>, <ChoiceField /> meu filho &nbsp;a participar das aulas
            </Line>
            <Line $align="left">de Ensino Religioso.</Line>
            <DateLine>
              Ariquemes, <Blank>______</Blank> de <Blank>___________________</Blank> <Typo>de</Typo> 2021.
            </DateLine>
            <Signature>
              <Blank>_____________________________________</Blank>
              <br />
              Assinatura.
            </Signature>
          </PageText>
        </Page>
      </Workspace>

      <StatusBar>
        <StatusInfo>
          <span>Página 1 de 1</span>
          <span>3 de 65 palavras</span>
          <ProofIcon />
          <span>Português (Brasil)</span>
          <MacroStatusIcon />
        </StatusInfo>
        <ViewButton aria-label="Modo de leitura"><BookIcon /></ViewButton>
        <ViewButton $active aria-label="Layout de impressão"><PrintLayoutIcon /></ViewButton>
        <ViewButton aria-label="Layout da Web"><WebLayoutIcon /></ViewButton>
        <ZoomButton aria-label="Reduzir">−</ZoomButton>
        <ZoomSlider type="range" aria-label="Zoom" value={zoom} onChange={(e) => setZoom(e.target.value)} />
        <ZoomButton aria-label="Ampliar">+</ZoomButton>
        <ZoomValue>180%</ZoomValue>
      </StatusBar>

      <Taskbar>
        <StartButton aria-label="Iniciar"><WindowsIcon /></StartButton>
        <SearchBox>
          <SearchIcon />
          <input aria-label="Pesquisar" placeholder="Digite aqui para pesquisar" />
        </SearchBox>
        <Apps>
          {APPS.map(({ name, Icon, open, active }) => (
            <AppButton key={name} aria-label={name} $open={open} $active={active}><Icon /></AppButton>
          ))}
        </Apps>
        <Tray>
          {TRAY.map(([name, Icon]) => (
            <TrayButton key={name} aria-label={name}><Icon /></TrayButton>
          ))}
          <TrayButton $w={32} aria-label="Windows Ink"><PenIcon /></TrayButton>
          <TrayButton $w={30}><span>POR</span><span>PTB2</span></TrayButton>
          <TrayButton $w={62}><span>09:58</span><span>07/04/2021</span></TrayButton>
          <TrayButton $w={40} aria-label="Notificações"><NotificationIcon /></TrayButton>
          <ShowDesktop aria-label="Mostrar área de trabalho" />
        </Tray>
      </Taskbar>
    </Screen>
  );
}

export default App;
